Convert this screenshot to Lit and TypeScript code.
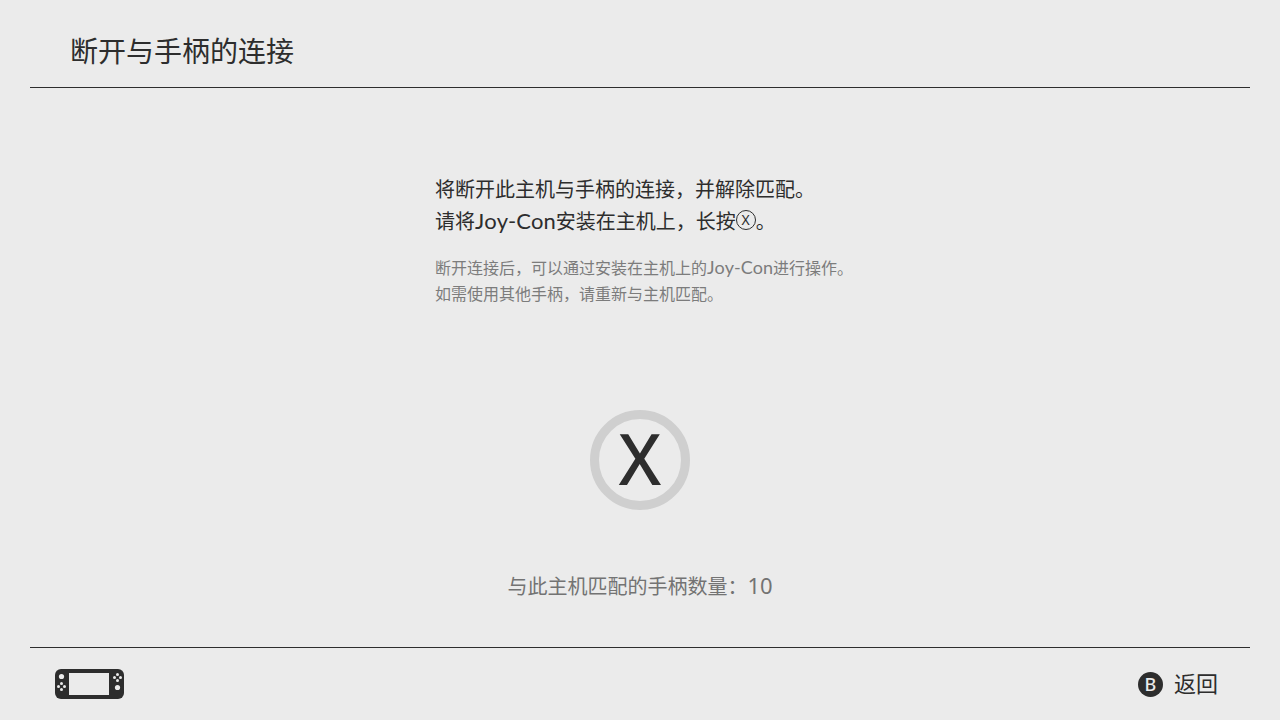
import { LitElement, html, css, svg } from "lit";
import { customElement, property } from "lit/decorators.js";

@customElement("console-icon")
class ConsoleIcon extends LitElement {
  static styles = css`
    :host {
      display: block;
      line-height: 0;
    }
  `;

  private pad(cx: number, cy: number) {
    return [
      [0, -3],
      [3, 0],
      [0, 3],
      [-3, 0],
    ].map(([dx, dy]) => svg`<circle cx=${cx + dx} cy=${cy + dy} r="1.5" />`);
  }

  render() {
    return html`<svg width="69" height="30" viewBox="0 0 69 30" role="img" aria-label="主机">
      <rect width="69" height="30" rx="6" fill="#2d2d2d" />
      <g fill="#ebebeb">
        <rect x="14" y="4" width="40" height="22" />
        <circle cx="6.5" cy="7.5" r="2.6" />
        <circle cx="62.5" cy="18.5" r="2.6" />
        ${this.pad(6.5, 17.5)} ${this.pad(62.5, 8.5)}
      </g>
    </svg>`;
  }
}

@customElement("app-root")
class AppRoot extends LitElement {
  @property({ type: Number }) paired = 10;

  static styles = css`
    :host {
      display: flex;
      flex-direction: column;
      box-sizing: border-box;
      min-height: 100vh;
      padding: 0 30px;
      background: #ebebeb;
      color: #2d2d2d;
      font-family: "Noto Sans CJK SC", sans-serif;
    }
    header {
      padding: 29px 40px 16px;
      border-bottom: 1px solid #2d2d2d;
    }
    h1 {
      margin: 0;
      font-size: 28px;
      line-height: 42px;
      font-weight: 400;
    }
    main {
      flex: 1;
      display: flex;
      flex-direction: column;
      align-items: center;
      padding-top: 85px;
    }
    p {
      margin: 0;
    }
    .text {
      padding-left: 8px;
    }
    .lead {
      font-size: 20px;
      line-height: 32px;
    }
    .note {
      margin-top: 17px;
      font-size: 16px;
      line-height: 26px;
      color: #7c7c7c;
    }
    .latin {
      font-family: Lato, sans-serif;
      font-size: 22px;
      font-kerning: none;
      line-height: 1;
    }
    .note .latin {
      font-size: 18px;
    }
    .number {
      font-family: "Noto Sans", sans-serif;
      font-size: 22px;
      line-height: 1;
    }
    .glyph {
      display: inline-block;
      box-sizing: border-box;
      width: 20px;
      height: 20px;
      margin-top: 5px;
      border: 1px solid #2d2d2d;
      border-radius: 50%;
      font-family: "Noto Sans", sans-serif;
      font-size: 14px;
      line-height: 18px;
      text-align: center;
      vertical-align: top;
    }
    button {
      margin: 0;
      padding: 0;
      border: 0;
      background: none;
      color: inherit;
      font: inherit;
      cursor: pointer;
    }
    .hold {
      display: grid;
      place-items: center;
      box-sizing: border-box;
      width: 100px;
      height: 100px;
      margin-top: 104px;
      padding-bottom: 4px;
      border: 9px solid #cfcfcf;
      border-radius: 50%;
      font-family: "Noto Sans", sans-serif;
      font-size: 70px;
      font-weight: 500;
      line-height: 78px;
    }
    .count {
      margin-top: 60px;
      font-size: 20px;
      line-height: 32px;
      color: #737373;
    }
    footer {
      display: flex;
      align-items: center;
      justify-content: space-between;
      height: 72px;
      padding: 0 32px 0 25px;
      border-top: 1px solid #2d2d2d;
    }
    .back {
      display: flex;
      align-items: center;
      gap: 11px;
      font-size: 22px;
      line-height: 32px;
    }
    .label {
      padding-bottom: 4px;
    }
    .key {
      display: grid;
      place-items: center;
      width: 25px;
      height: 25px;
      border-radius: 50%;
      background: #2d2d2d;
      color: #ebebeb;
      font-family: "Noto Sans", sans-serif;
      font-size: 18px;
      font-weight: 500;
      line-height: 25px;
    }
  `;

  render() {
    const joyCon = html`<span class="latin">Joy-Con</span>`;
    return html`
      <header lang="zh-CN"><h1>断开与手柄的连接</h1></header>
      <main lang="zh-CN">
        <div class="text">
          <p class="lead">将断开此主机与手柄的连接，并解除匹配。<br />请将${joyCon}安装在主机上，长按<span class="glyph">X</span>。</p>
          <p class="note">断开连接后，可以通过安装在主机上的${joyCon}进行操作。<br />如需使用其他手柄，请重新与主机匹配。</p>
        </div>
        <button class="hold" type="button">X</button>
        <p class="count">与此主机匹配的手柄数量：<span class="number">${this.paired}</span></p>
      </main>
      <footer lang="zh-CN">
        <console-icon></console-icon>
        <button class="back" type="button"><span class="key">B</span><span class="label">返回</span></button>
      </footer>
    `;
  }
}
